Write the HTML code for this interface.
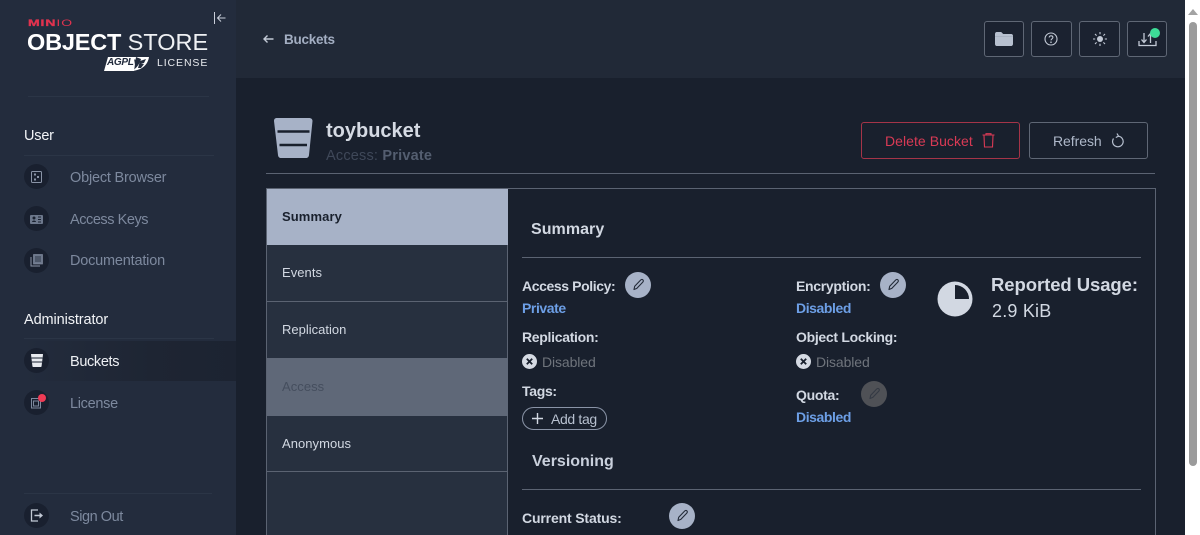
<!DOCTYPE html>
<html><head><meta charset="utf-8">
<style>
html,body{margin:0;padding:0;width:1200px;height:535px;overflow:hidden;background:#19202d}
*{box-sizing:border-box}
body{font-family:"Liberation Sans",sans-serif;position:relative}
.a{position:absolute}
.t{position:absolute;white-space:nowrap;line-height:20px;height:20px}
svg{position:absolute;display:block}
.nav{color:#7d899e;font-size:14.5px;letter-spacing:-.2px;left:70px}
.ic{position:absolute;left:24px;width:25px;height:25px;border-radius:50%;background:#19202f}
.hr{position:absolute;height:1px}
.lb{color:#d2d8e2;font-size:14px;font-weight:700;letter-spacing:-.3px}
.bl{color:#6d9fe6;font-size:14px;font-weight:700;letter-spacing:-.42px}
.dis{color:#6f747c;font-size:14px;letter-spacing:-.1px}
.pen{position:absolute;width:26px;height:26px;border-radius:50%;background:#a7b2c7}
.tab{position:absolute;left:267px;width:241px;color:#d2d8e2;font-size:13px;letter-spacing:.05px;padding-left:15px}
.hb{position:absolute;top:21px;height:36px;border:1px solid #5f6775;border-radius:3px;background:#1b2230}
</style></head>
<body>
<svg width="0" height="0" style="position:absolute"><defs>
<symbol id="p" viewBox="0 0 26 26"><path d="M9 17.500l.7-3.200 6-6.300c.7-.7 1.600-.7 2.200-.1.600.6.600 1.500-.1 2.200l-6 6.300z" fill="none" stroke="#232b39" stroke-width="1.100" stroke-linejoin="round"/></symbol>
<symbol id="x" viewBox="0 0 15 15"><circle cx="7.500" cy="7.500" r="7.500" fill="#d5dae3"/><path d="M4.800 4.800l5.400 5.400M10.200 4.800l-5.400 5.400" stroke="#19202d" stroke-width="1.800"/></symbol>
</defs></svg>

<!-- sidebar -->
<div class="a" style="left:0;top:0;width:236px;height:535px;background:#232c3d"></div>
<!-- header -->
<div class="a" style="left:236px;top:0;width:949px;height:78px;background:#212937"></div>
<!-- scrollbar -->
<div class="a" style="left:1185px;top:0;width:15px;height:535px;background:#fff"></div>
<div class="a" style="left:1189px;top:22px;width:8px;height:444px;background:#9b9b9b;border-radius:4px"></div>
<svg style="left:1188px;top:9px" width="10" height="6"><path d="M0 6L5 0l5 6z" fill="#a3a3a3"/></svg>

<!-- logo -->
<div class="t" style="left:28px;top:13px;font-size:9px;font-weight:700;color:#e0334f;letter-spacing:.6px;transform:scaleX(1.55);transform-origin:0 50%;-webkit-text-stroke:.3px #e0334f">MIN<span style="font-weight:400;-webkit-text-stroke:0;color:#e0334f">IO</span></div>
<div class="t" style="left:27px;top:32px;font-size:23.500px;font-weight:700;color:#fff;letter-spacing:-.2px">OBJECT<span style="font-weight:400;color:#eef0f3;letter-spacing:0"> STORE</span></div>
<svg style="left:103px;top:55px" width="47" height="17" viewBox="0 0 47 17"><path d="M1 16L5 2h28l-2 14z" fill="#fff"/><path d="M33 2h13c-1 7-6 13-17 14 5-3 8-8 9-12z" fill="#fff"/><path d="M37 6l6-2-2 4-3 1 3 0-3 4-3 0z" fill="#232c3d"/></svg>
<div class="t" style="left:107px;top:57px;font-size:10px;font-weight:700;font-style:italic;color:#232c3d;letter-spacing:-.3px;height:11px;line-height:11px">AGPLv</div>
<div class="t" style="left:157px;top:53px;font-size:10.500px;color:#e8ebef;letter-spacing:.9px">LICENSE</div>
<svg style="left:213px;top:11px" width="14" height="14" viewBox="0 0 14 14"><path d="M1.500 1v12M12.500 7H4.500M8 3.500L4.500 7 8 10.500" fill="none" stroke="#c9cfda" stroke-width="1"/></svg>
<div class="hr" style="left:28px;top:96px;width:181px;background:#2b3546"></div>

<!-- nav -->
<div class="t" style="left:24px;top:126px;color:#f2f4f7;font-size:14.500px;letter-spacing:-.2px">User</div>
<div class="hr" style="left:24px;top:155px;width:190px;background:#2b3546"></div>
<div class="ic" style="top:164px"></div>
<svg style="left:31px;top:171px" width="11" height="12" viewBox="0 0 11 12"><rect x=".5" y=".5" width="10" height="11" rx="1" fill="none" stroke="#8a94a7"/><rect x="3" y="2.500" width="2" height="2" fill="#8a94a7"/><rect x="6" y="5" width="2" height="2" fill="#8a94a7"/><rect x="3" y="7.500" width="2" height="2" fill="#8a94a7"/></svg>
<div class="t nav" style="top:168px">Object Browser</div>
<div class="ic" style="top:206px"></div>
<svg style="left:30px;top:214px" width="13" height="10" viewBox="0 0 13 10"><rect x="0" y="1" width="13" height="9" rx="1" fill="#6d788c"/><circle cx="4" cy="4" r="1.500" fill="#19202f"/><path d="M2 8c0-2 4-2 4 0z" fill="#19202f"/><path d="M8 3h3M8 5.500h3M8 8h3" stroke="#19202f"/></svg>
<div class="t nav" style="top:210px;letter-spacing:-.45px">Access Keys</div>
<div class="ic" style="top:248px"></div>
<svg style="left:30px;top:254px" width="13" height="13" viewBox="0 0 13 13"><rect x="3.500" y=".5" width="9" height="9.500" fill="#6d788c" stroke="#8a94a7" stroke-width=".6"/><path d="M5 3h6M5 5h6M5 7h6" stroke="#19202f" stroke-width=".8"/><path d="M1 3v9h9" fill="none" stroke="#8a94a7"/></svg>
<div class="t nav" style="top:251px">Documentation</div>

<div class="t" style="left:24px;top:310px;color:#f2f4f7;font-size:14.500px;letter-spacing:-.1px">Administrator</div>
<div class="hr" style="left:24px;top:338px;width:190px;background:#2b3546"></div>
<div class="a" style="left:24px;top:341px;width:212px;height:40px;background:linear-gradient(90deg,#232c3d 0,#1e2533 60%,#1c2331 100%)"></div>
<div class="ic" style="top:348px"></div>
<svg style="left:31px;top:354px" width="12" height="13" viewBox="0 0 12 13"><path d="M0 .5C0 .2.200 0 .5 0h11c.3 0 .5.200.5.500L10.600 12c0 .5-.3 1-.8 1H2.200c-.5 0-.8-.5-.8-1z" fill="#e8ebf0"/><path d="M.5 4h11M1 8h10" stroke="#19202f" stroke-width="1.100"/></svg>
<div class="t" style="left:70px;top:352px;color:#eef0f4;font-size:14.500px;letter-spacing:-.35px">Buckets</div>
<div class="ic" style="top:390px"></div>
<svg style="left:30px;top:397px" width="12" height="12" viewBox="0 0 12 12"><rect x="1.500" y="1.500" width="9" height="9.500" fill="none" stroke="#7d899e"/><rect x="3.500" y="4" width="5" height="5" fill="none" stroke="#7d899e"/></svg>
<div class="a" style="left:38px;top:394px;width:8px;height:8px;border-radius:50%;background:#ee3b55"></div>
<div class="t nav" style="top:394px;letter-spacing:-.3px">License</div>

<div class="hr" style="left:24px;top:493px;width:188px;background:#2b3546"></div>
<div class="ic" style="top:503px"></div>
<svg style="left:30px;top:509px" width="14" height="13" viewBox="0 0 14 13"><path d="M8 1H1.500v11H8" fill="none" stroke="#c2c9d5" stroke-width="1.300"/><path d="M4.500 6.500H10" stroke="#c2c9d5" stroke-width="1.500"/><path d="M9.500 3.500l3.500 3-3.500 3z" fill="#c2c9d5"/></svg>
<div class="t nav" style="top:507px;letter-spacing:-.45px">Sign Out</div>

<!-- top bar -->
<svg style="left:262px;top:34px" width="12" height="10" viewBox="0 0 12 10"><path d="M11.500 5H2M5.500 1.500L2 5l3.500 3.500" fill="none" stroke="#c3cad6" stroke-width="1.400"/></svg>
<div class="t" style="left:284px;top:30px;color:#a3aec2;font-size:13.500px;font-weight:700;letter-spacing:-.25px">Buckets</div>

<div class="hb" style="left:984px;width:40px"></div>
<svg style="left:995px;top:31px" width="18" height="16" viewBox="0 0 18 16"><path d="M0 3c0-1 .7-2 1.700-2h4.500l2 2h8c1 0 1.800.8 1.800 1.800V13c0 1-.8 2-1.800 2H1.700C.7 15 0 14 0 13z" fill="#b7c0cf"/><path d="M0 5.500h18" stroke="#99a3b4" stroke-width=".6"/></svg>
<div class="hb" style="left:1031px;width:41px"></div>
<svg style="left:1044px;top:32px" width="14" height="14" viewBox="0 0 14 14"><circle cx="7" cy="7" r="6" fill="none" stroke="#c3cad6" stroke-width="1.100"/><path d="M5.200 5.500C5.200 4.400 6 3.800 7 3.800c1.100 0 1.900.7 1.900 1.600 0 1.400-1.900 1.400-1.900 3" fill="none" stroke="#c3cad6" stroke-width="1.100"/><circle cx="7" cy="10.200" r=".8" fill="#c3cad6"/></svg>
<div class="hb" style="left:1079px;width:41px"></div>
<svg style="left:1093px;top:32px" width="14" height="14" viewBox="0 0 14 14"><circle cx="7" cy="7" r="3" fill="#c3cad6"/><path d="M7 0v2.200M7 11.800V14M0 7h2.200M11.800 7H14M2 2l1.600 1.600M10.400 10.400L12 12M2 12l1.600-1.600M10.400 3.600L12 2" stroke="#c3cad6" stroke-width="1.100"/></svg>
<div class="hb" style="left:1127px;width:40px"></div>
<svg style="left:1138px;top:30px" width="19" height="17" viewBox="0 0 19 17"><path d="M1 11v4.500h17V11" fill="none" stroke="#c3cad6" stroke-width="1.300"/><path d="M6 3v9M3.500 9.500L6 12.500l2.500-3M12.500 13V4M10 6.500L12.500 3.500 15 6.500" fill="none" stroke="#c3cad6" stroke-width="1.300"/></svg>
<div class="a" style="left:1150px;top:28px;width:10px;height:10px;border-radius:50%;background:#3ddc97"></div>

<!-- bucket title -->
<svg style="left:273px;top:117px" width="42" height="42" viewBox="0 0 42 42"><path d="M1 4C1 2 2 1 4 1h32c2 0 3.500 1 3.500 3L36 38c-.2 2-1.500 3-3 3H8c-1.500 0-2.800-1-3-3z" fill="#a7b2c7"/><path d="M4.500 14.500h32M6.500 28h27.500" stroke="#19202d" stroke-width="2.500"/></svg>
<div class="t" style="left:326px;top:121px;color:#d5dae3;font-size:20px;font-weight:700;letter-spacing:0">toybucket</div>
<div class="t" style="left:326px;top:146px;color:#3f4859;font-size:14.500px;letter-spacing:.2px">Access: <b style="color:#545e70">Private</b></div>
<div class="hr" style="left:266px;top:173px;width:889px;background:#5b6372"></div>

<div class="a" style="left:861px;top:122px;width:159px;height:37px;border:1px solid #a53448;border-radius:3px"></div>
<div class="t" style="left:885px;top:131px;color:#d93a55;font-size:14px;letter-spacing:.05px">Delete Bucket</div>
<svg style="left:982px;top:133px" width="13" height="15" viewBox="0 0 13 15"><path d="M.5 2h12M4 2V.7h5V2M2 2.500l.5 11.500h8L11 2.500" fill="none" stroke="#d93a55" stroke-width="1.100"/></svg>
<div class="a" style="left:1029px;top:122px;width:119px;height:37px;border:1px solid #5f6775;border-radius:3px"></div>
<div class="t" style="left:1053px;top:131px;color:#aeb8c9;font-size:14px;letter-spacing:-.05px">Refresh</div>
<svg style="left:1111px;top:133px" width="13" height="15" viewBox="0 0 13 15"><path d="M2.500 5.500a5.300 5.300 0 1 0 4.500-2.300" fill="none" stroke="#b7c0cf" stroke-width="1.200"/><path d="M6 .5l1.500 2.700-2.700 1.300" fill="none" stroke="#b7c0cf" stroke-width="1.200"/></svg>

<!-- panel -->
<div class="a" style="left:266px;top:188px;width:890px;height:347px;border:1px solid #5b6372;border-bottom:0"></div>
<div class="a" style="left:267px;top:189px;width:241px;height:346px;background:#27303f"></div>
<div class="a" style="left:507px;top:189px;width:1px;height:346px;background:#5b6372"></div>
<div class="tab" style="top:189px;height:56px;background:#a7b2c7;color:#19202d;font-weight:700;line-height:55px;letter-spacing:.1px">Summary</div>
<div class="tab" style="top:245px;height:57px;border-bottom:1px solid #5b6372;line-height:56px">Events</div>
<div class="tab" style="top:302px;height:57px;line-height:56px;letter-spacing:0">Replication</div>
<div class="tab" style="top:358px;height:58px;background:#5f6878;color:#454e5e;line-height:57px">Access</div>
<div class="tab" style="top:416px;height:56px;border-bottom:1px solid #5b6372;line-height:55px">Anonymous</div>

<!-- summary -->
<div class="t" style="left:531px;top:220px;color:#d2d8e2;font-size:16px;font-weight:700;letter-spacing:.05px">Summary</div>
<div class="hr" style="left:522px;top:257px;width:619px;background:#5b6372"></div>

<div class="t lb" style="left:522px;top:276px;letter-spacing:-.4px">Access Policy:</div>
<div class="pen" style="left:625px;top:272px"><svg style="left:0;top:0" width="26" height="26"><use href="#p"/></svg></div>
<div class="t bl" style="left:522px;top:298px">Private</div>
<div class="t lb" style="left:522px;top:327px;letter-spacing:-.3px">Replication:</div>
<svg style="left:522px;top:354px" width="15" height="15"><use href="#x"/></svg>
<div class="t dis" style="left:542px;top:352px">Disabled</div>
<div class="t lb" style="left:522px;top:381px">Tags:</div>
<div class="a" style="left:522px;top:407px;width:85px;height:23px;border:1px solid #8a94a7;border-radius:12px"></div>
<svg style="left:532px;top:413px" width="11" height="11" viewBox="0 0 11 11"><path d="M5.500 0v11M0 5.500h11" stroke="#d2d8e2" stroke-width="1.400"/></svg>
<div class="t" style="left:551px;top:409px;color:#b7c0cf;font-size:14px;letter-spacing:-.35px">Add tag</div>

<div class="t" style="left:532px;top:452px;color:#c9d0dc;font-size:16px;font-weight:700;letter-spacing:0">Versioning</div>
<div class="hr" style="left:522px;top:489px;width:619px;background:#5b6372"></div>
<div class="t lb" style="left:522px;top:508px;letter-spacing:-.15px">Current Status:</div>
<div class="pen" style="left:669px;top:503px"><svg style="left:0;top:0" width="26" height="26"><use href="#p"/></svg></div>

<div class="t lb" style="left:796px;top:276px">Encryption:</div>
<div class="pen" style="left:880px;top:272px"><svg style="left:0;top:0" width="26" height="26"><use href="#p"/></svg></div>
<div class="t bl" style="left:796px;top:298px">Disabled</div>
<div class="t lb" style="left:796px;top:327px">Object Locking:</div>
<svg style="left:796px;top:354px" width="15" height="15"><use href="#x"/></svg>
<div class="t dis" style="left:816px;top:352px">Disabled</div>
<div class="t lb" style="left:796px;top:385px;letter-spacing:-.3px">Quota:</div>
<div class="pen" style="left:861px;top:381px;background:#4f5156"><svg style="left:0;top:0;opacity:.6" width="26" height="26"><use href="#p"/></svg></div>
<div class="t bl" style="left:796px;top:407px">Disabled</div>

<svg style="left:937px;top:281px" width="36" height="36" viewBox="0 0 36 36"><circle cx="18" cy="18" r="17.500" fill="#d2d8e2"/><path d="M18 4a14 14 0 0 1 14 14H18z" fill="#19202d"/></svg>
<div class="t" style="left:991px;top:275px;color:#d2d8e2;font-size:18.500px;font-weight:700;line-height:20px;letter-spacing:-.07px">Reported Usage:</div>
<div class="t" style="left:992px;top:301px;color:#d2d8e2;font-size:18px;letter-spacing:.2px">2.9 KiB</div>
</body></html>
